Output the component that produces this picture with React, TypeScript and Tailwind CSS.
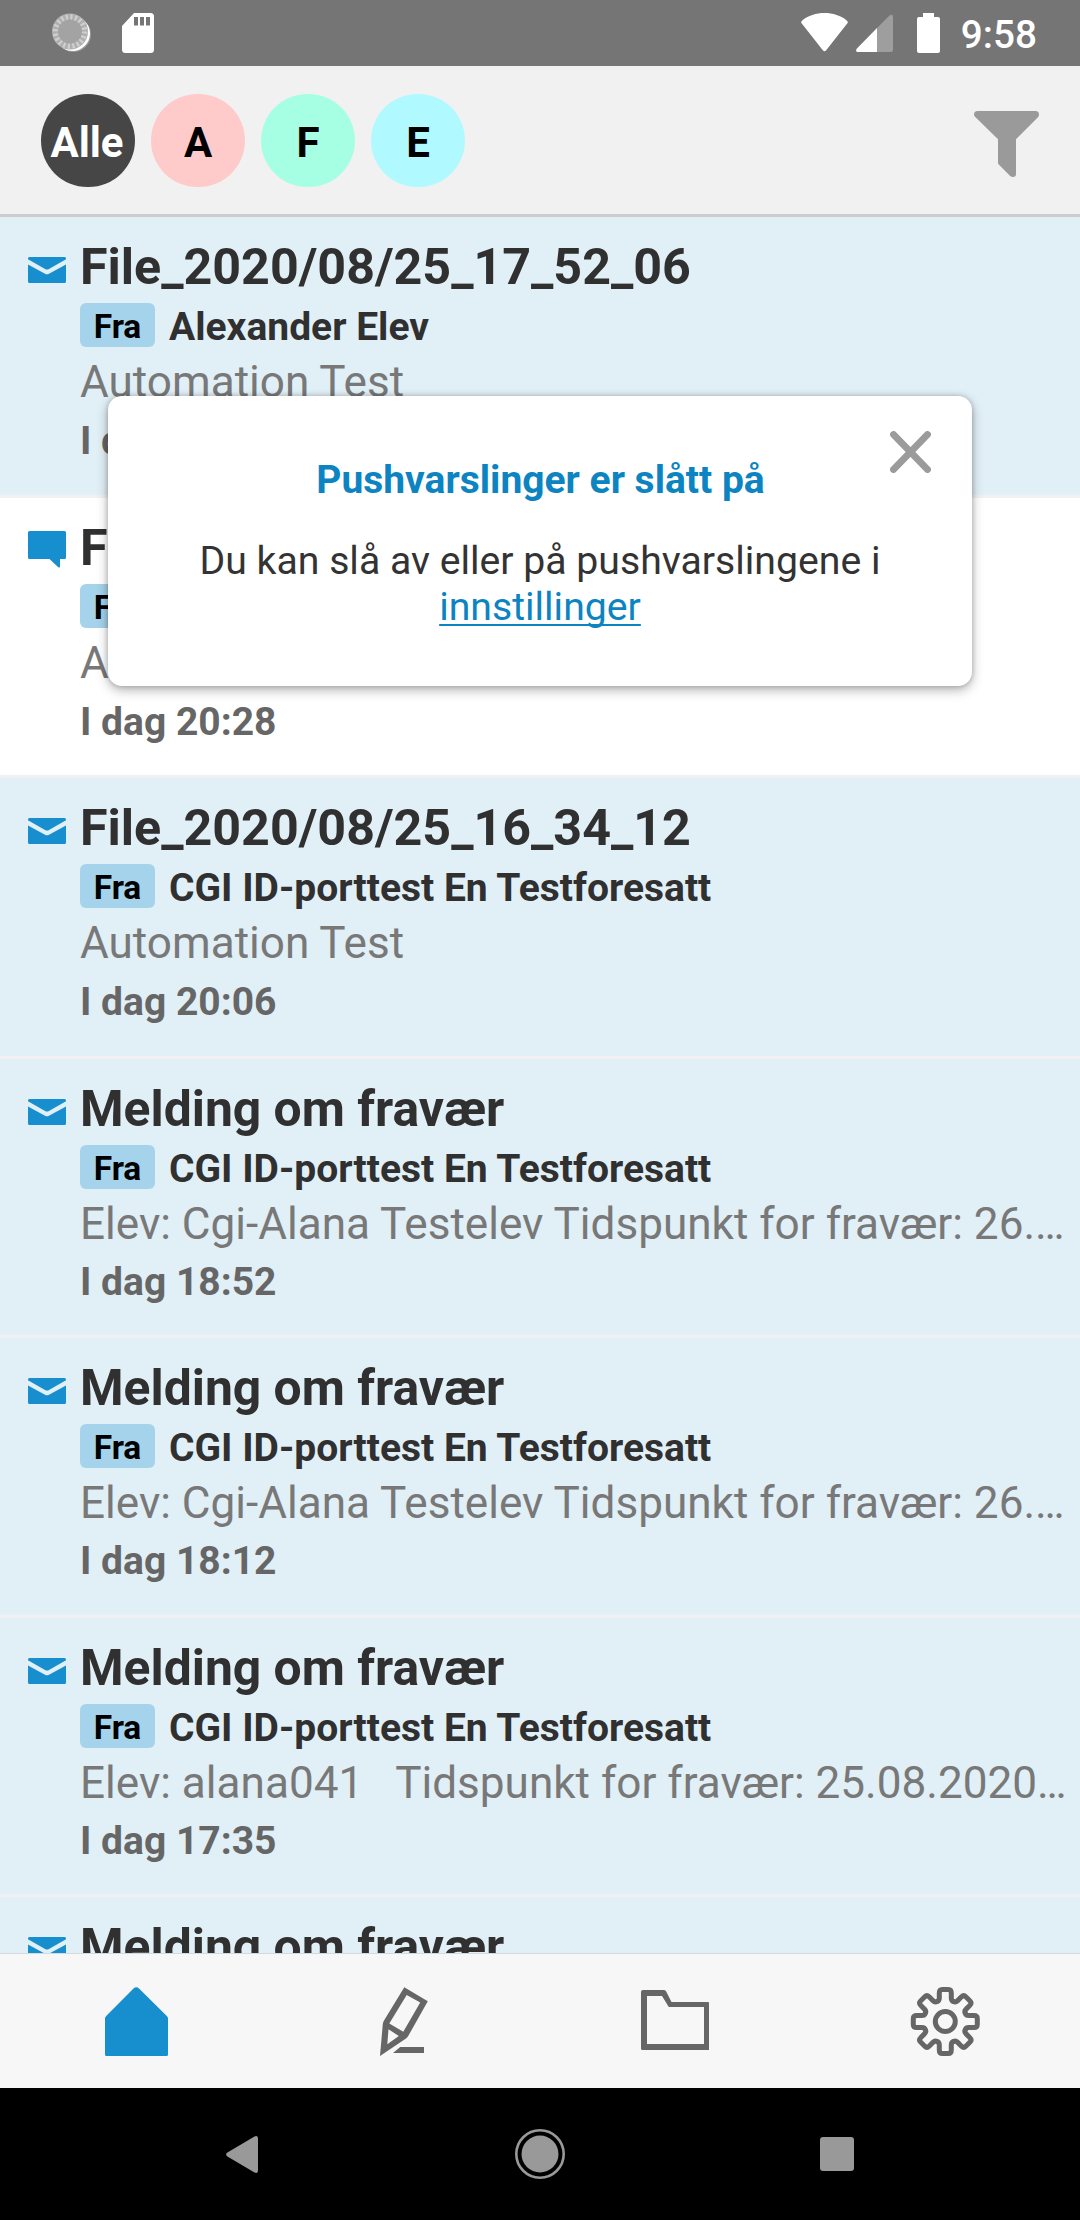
import type { ReactNode } from "react";

type Message = {
  kind: "mail" | "chat";
  title: string;
  sender: string;
  preview: string;
  time: string;
  size: string;
};

const ID = "CGI ID-porttest En Testforesatt";
const ABSENCE = "Melding om fravær";

const messages: Message[] = [
  { kind: "mail", title: "File_2020/08/25_17_52_06", sender: "Alexander Elev", preview: "Automation Test", time: "I dag 20:52", size: "h-[281px]" },
  { kind: "chat", title: "File_2020/08/25_17_28_11", sender: "Alexander Elev", preview: "Automation Test", time: "I dag 20:28", size: "h-[280px]" },
  { kind: "mail", title: "File_2020/08/25_16_34_12", sender: ID, preview: "Automation Test", time: "I dag 20:06", size: "h-[281px]" },
  { kind: "mail", title: ABSENCE, sender: ID, preview: "Elev: Cgi-Alana Testelev Tidspunkt for fravær: 26.…", time: "I dag 18:52", size: "h-[279px]" },
  { kind: "mail", title: ABSENCE, sender: ID, preview: "Elev: Cgi-Alana Testelev Tidspunkt for fravær: 26.…", time: "I dag 18:12", size: "h-[280px]" },
  { kind: "mail", title: ABSENCE, sender: ID, preview: "Elev: alana041\u00a0\u00a0 Tidspunkt for fravær: 25.08.2020…", time: "I dag 17:35", size: "h-[279px]" },
  { kind: "mail", title: ABSENCE, sender: ID, preview: "Elev: alana041", time: "I dag 17:20", size: "h-[280px]" },
];

const filters = [
  { label: "Alle", style: "bg-[#464646] text-white pr-[2px]" },
  { label: "A", style: "bg-[#ffcaca] text-black" },
  { label: "F", style: "bg-[#a6ffe3] text-black" },
  { label: "E", style: "bg-[#b0faff] text-black" },
];

function StatusBar() {
  return (
    <div className="flex h-[66px] shrink-0 items-start justify-between bg-[#757575] pr-[43px] pl-[52px]">
      <div className="flex pt-[13px]">
        <svg className="h-10 w-10" viewBox="0 0 40 40">
          <circle cx="21.5" cy="21.5" r="17.5" fill="#9a9a9a" />
          <circle cx="20.5" cy="20.5" r="17.5" fill="#fff" />
          <circle cx="18" cy="18.5" r="18" fill="#b0b0b0" />
          <circle cx="18" cy="18.5" r="14.5" fill="none" stroke="#d0d0d0" strokeWidth="5.5" strokeDasharray="2 2.555" />
          <circle cx="18" cy="18.5" r="12" fill="#a3a3a3" />
        </svg>
        <svg className="ml-[30px] h-10 w-8" viewBox="0 0 32 40">
          <path fill="#fff" fillRule="evenodd" d="M12 0H28.5Q32 0 32 3.5V36.500Q32 40 28.500 40H3.500Q0 40 0 36.500V13ZM12 4V12.500H16V4ZM18 4V12.500H22V4ZM24 4V12.500H28V4Z" />
        </svg>
      </div>
      <div className="flex pt-[13px] text-white">
        <svg className="h-10 w-[47px]" viewBox="0 0 47 40">
          <path fill="#fff" d="M.8 10.500Q-.5 9 1 7.700C13-2.500 34-2.500 46 7.700Q47.500 9 46.200 10.500L25.200 37.300Q23.500 39 21.800 37.300Z" />
        </svg>
        <svg className="ml-2 h-10 w-[37px]" viewBox="0 0 37 40">
          <path fill="#9e9e9e" d="M33.500 2.500Q37 .5 37 4V37Q37 39 35 39H21V15Z" />
          <path fill="#fff" d="M21 15V39H1.500Q-1 39 .7 35.800Z" />
        </svg>
        <svg className="ml-6 h-10 w-[23px]" viewBox="0 0 23 40">
          <path fill="#fff" d="M6 0H17V4H21Q23 4 23 6V38Q23 40 21 40H2Q0 40 0 38V6Q0 4 2 4H6Z" />
        </svg>
        <span className="ml-[21px] text-[38.7px] leading-[44px] font-medium">9:58</span>
      </div>
    </div>
  );
}

function Header() {
  return (
    <header className="flex h-[151px] shrink-0 items-center justify-between border-b-3 border-[#cccccc] bg-[#f1f1f1] pr-[41px] pl-[41px]">
      <div className="flex gap-4">
        {filters.map((f) => (
          <button key={f.label} className={`flex h-[93px] w-[94px] items-center justify-center rounded-full pt-[5px] text-[42px] leading-none font-bold ${f.style}`}>
            {f.label}
          </button>
        ))}
      </div>
      <svg className="mt-[7px] h-[66px] w-[65px]" viewBox="0 0 65 66">
        <path fill="#9a9a9a" d="M3.500 0H61.500Q65 0 65 3.500Q65 5 64 6.200L42 28.300V63Q42 66 39 66Q37.500 66 36.200 65L24.700 53.500Q24 52.500 24 51.500V28.300L1 5.800Q0 4.800 0 3.500Q0 0 3.500 0Z" />
      </svg>
    </header>
  );
}

function MailIcon() {
  return (
    <svg className="mt-[40px] h-[26px] w-[38px]" viewBox="0 0 38 26" fill="#178ecd">
      <path d="M1.500 0H36.500Q38 0 38 1.500V2.300L20.500 12.200Q19 13 17.500 12.200L0 2.300V1.500Q0 0 1.500 0Z" />
      <path d="M0 7.500L17 16.700Q19 17.700 21 16.700L38 7.500V24.500Q38 26 36.500 26H1.500Q0 26 0 24.500Z" />
    </svg>
  );
}

function ChatIcon() {
  return (
    <svg className="mt-[33px] h-[37px] w-[38px]" viewBox="0 0 38 37">
      <path fill="#178ecd" d="M1.500 0H36.500Q38 0 38 1.500V26.500Q38 28 36.500 28H32V35.500Q31.700 37.300 30.300 36.300L21.500 28H1.500Q0 28 0 26.500V1.500Q0 0 1.500 0Z" />
    </svg>
  );
}

function MessageRow({ m }: { m: Message }) {
  const absence = m.title === ABSENCE;
  return (
    <article className={`flex shrink-0 border-b-3 border-[#f1f1f1] pl-7 ${m.size} ${m.kind === "chat" ? "bg-white" : "bg-[#e1eff6]"}`}>
      {m.kind === "chat" ? <ChatIcon /> : <MailIcon />}
      <div className="ml-[14px] flex min-w-0 flex-1 flex-col pt-5 whitespace-nowrap">
        <h2 className={`h-[66px] leading-[60px] font-bold text-[#303030] ${absence ? "text-[49.8px]" : "text-[50.2px]"}`}>{m.title}</h2>
        <div className="flex h-[44px]">
          <span className="flex h-[44px] w-[75px] items-center justify-center rounded-md bg-[#a5d3eb] pt-[4px] text-[33.500px] leading-none font-bold text-black">Fra</span>
          <span className="ml-[14px] pt-[2px] text-[39px] leading-[44px] font-bold text-[#303030]">{m.sender}</span>
        </div>
        <p className="mt-[9px] text-[44.1px] leading-[52px] text-[#787878]">{m.preview}</p>
        <p className={`text-[39px] leading-[46px] font-bold text-[#666666] ${absence ? "mt-[9px]" : "mt-[10px]"}`}>{m.time}</p>
      </div>
    </article>
  );
}

function Notice() {
  return (
    <div className="absolute top-[396px] left-[108px] flex h-[290px] w-[864px] flex-col items-center rounded-[14px] bg-white pt-[61px] text-center text-[39px] leading-[46px] shadow-[0_4px_12px_rgba(0,0,0,0.3),0_0_5px_rgba(0,0,0,0.2)]">
      <h3 className="pl-px font-bold text-[#0c84c1]">Pushvarslinger er slått på</h3>
      <p className="mt-[35px] w-[720px] text-[39.200px] text-[#333333]">
        Du kan slå av eller på pushvarslingene i{" "}
        <a className="text-[#0c84c1] underline decoration-2 underline-offset-[4px] [text-decoration-skip-ink:none]">innstillinger</a>
      </p>
      <button className="absolute top-[35px] right-[41px]">
        <svg className="h-[42px] w-[41px]" viewBox="0 0 41 42" stroke="#9b9b9b" strokeWidth="7" strokeLinecap="round">
          <path d="M3.600 3.600L37.400 38.400M37.400 3.600L3.600 38.400" />
        </svg>
      </button>
    </div>
  );
}

function Tab({ children }: { children: ReactNode }) {
  return <button className="flex flex-1 justify-center pt-[33px]">{children}</button>;
}

function TabBar() {
  return (
    <nav className="flex h-[135px] shrink-0 border-t border-[#d3dadd] bg-[#f7f7f7]">
      <Tab>
        <svg className="h-[70px] w-[70px]" viewBox="100 1987 70 70">
          <path fill="#178ecd" d="M133.500 1988.500Q136.300 1986.200 139 1988.500L166.800 2016Q168 2017.200 168 2018.500V2054.500Q168 2056 166.500 2056H106.500Q105 2056 105 2054.500V2018.500Q105 2017.200 106.200 2016Z" />
        </svg>
      </Tab>
      <Tab>
        <svg className="h-[70px] w-[70px]" viewBox="370 1987 70 70">
          <path
            fill="#666"
            fillRule="evenodd"
            d="M404.300 1987.300L427.800 2001.300L408.500 2035.500Q407.800 2037.200 406 2038.500L380 2056L382.800 2024Q383 2022 384 2020.500ZM406.700 1995L389.300 2023.500L403.300 2031.800L420.200 2002.500ZM388.500 2029.300L387.300 2044.300L398.800 2036Z"
          />
          <path fill="#666" d="M393 2053L400.200 2047H424V2053Z" />
        </svg>
      </Tab>
      <Tab>
        <svg className="h-[70px] w-[70px]" viewBox="640 1987 70 70">
          <path
            fill="#666"
            fillRule="evenodd"
            d="M643 1990H664Q665.500 1990 666.200 1991.500L671.500 2002H708Q709 2002 709 2003V2050H642.500Q641 2050 641 2048.500V1992Q641 1990 643 1990ZM647 1996V2044H704V2007H668.800L662 1996Z"
          />
        </svg>
      </Tab>
      <Tab>
        <svg className="h-[70px] w-[70px]" viewBox="-35.3 -34.500 70 70" fill="none" stroke="#666" strokeWidth="5">
          <circle r="10" />
          {[0, 45, 90, 135, 180, 225, 270, 315].map((angle) => (
            <path key={angle} transform={`rotate(${angle})`} strokeLinecap="round" d="M-8.300-20Q-6-20.500-6-23.500V-28.500Q-6-32-3-32H3Q6-32 6-28.500V-23.500Q6-20.500 8.300-20" />
          ))}
        </svg>
      </Tab>
    </nav>
  );
}

function SystemNav() {
  return (
    <div className="flex h-[132px] shrink-0 items-center bg-black pl-[226px]">
      <svg className="h-[37px] w-8" viewBox="0 0 32 37">
        <path fill="#999" d="M28.500.5Q32-1 32 3V34Q32 38 28.500 36.500L1 20.200Q-.8 18.500 1 16.800Z" />
      </svg>
      <svg className="ml-[256px] h-[52px] w-[52px]" viewBox="-26 -26 52 52">
        <circle r="23.700" fill="none" stroke="#999" strokeWidth="2.600" />
        <circle r="18.500" fill="#999" />
      </svg>
      <div className="ml-[254px] h-[34px] w-[34px] rounded-[3px] bg-[#999999]" />
    </div>
  );
}

export default function App() {
  return (
    <div className="relative flex h-[2220px] w-[1080px] flex-col overflow-hidden bg-white font-['Roboto',sans-serif]">
      <StatusBar />
      <Header />
      <main className="flex min-h-0 flex-1 flex-col overflow-hidden">
        {messages.map((m, i) => (
          <MessageRow key={i} m={m} />
        ))}
      </main>
      <TabBar />
      <SystemNav />
      <Notice />
    </div>
  );
}
